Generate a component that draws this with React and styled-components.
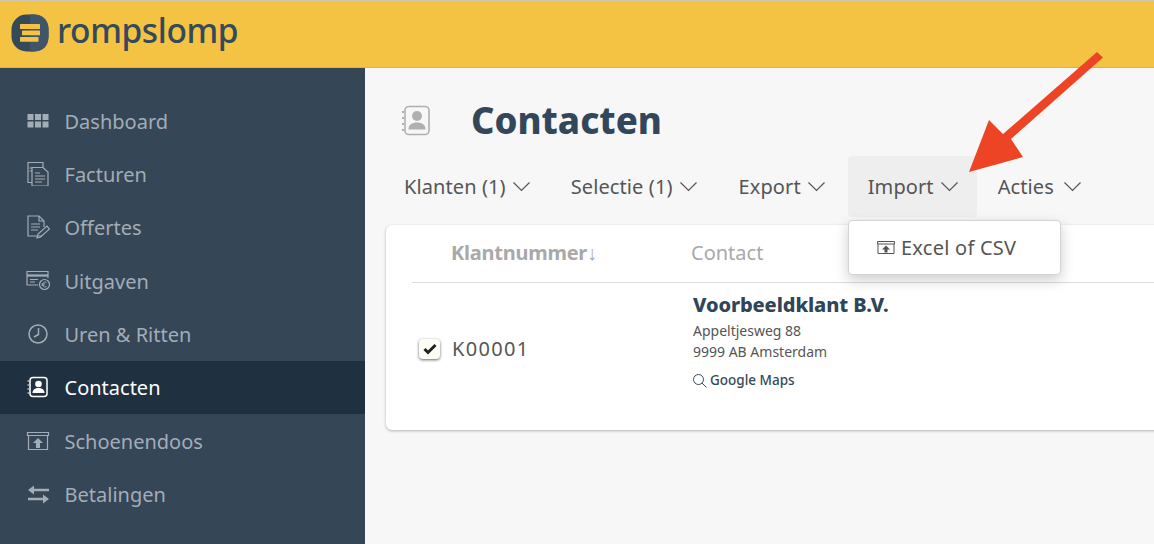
import React from "react";
import styled, { createGlobalStyle } from "styled-components";

const Global = createGlobalStyle`
  html, body { margin: 0; padding: 0; height: 544px; overflow: hidden; background: #f7f7f7; }
  body { font-family: "Noto Sans", "Open Sans", sans-serif; }
  #root { height: 544px; }
`;

const Page = styled.div`
  position: relative;
  width: 1154px;
  height: 544px;
  overflow: hidden;
  display: flex;
  flex-direction: column;
`;

const Header = styled.header`
  height: 68px;
  box-sizing: border-box;
  flex: none;
  background: #f5c344;
  border-top: 1px solid #cfc6ae;
  border-bottom: 1px solid #e3b23c;
  display: flex;
  align-items: center;
  padding: 0 0 2px 11px;
  gap: 8px;
`;

const Brand = styled.span`
  font-size: 33.5px;
  line-height: 1;
  color: #34495a;
  letter-spacing: -0.4px;
  font-weight: 500;
  padding-bottom: 4px;
`;

const Body = styled.div`
  flex: 1;
  display: flex;
  min-height: 0;
`;

const Sidebar = styled.nav`
  width: 365px;
  flex: none;
  background: #354657;
  padding-top: 26px;
  box-sizing: border-box;
`;

const NavItem = styled.div`
  height: 53.33px;
  box-sizing: border-box;
  display: flex;
  align-items: center;
  padding-left: 26px;
  gap: 15px;
  font-size: 20px;
  color: ${(p) => (p.$active ? "#ffffff" : "#a3adb6")};
  background: ${(p) => (p.$active ? "#1f3040" : "transparent")};
`;

const NavLabel = styled.span`
  padding-top: 1px;
  margin-left: -0.5px;
`;

const NavIcon = styled.svg`
  width: 24px;
  height: 24px;
  flex: none;
  fill: none;
  stroke: currentColor;
  stroke-width: 1.2;
`;

const Main = styled.main`
  flex: 1;
  min-width: 0;
  position: relative;
  background: #f7f7f7;
  padding: 32px 0 0 21px;
  box-sizing: border-box;
`;

const TitleRow = styled.div`
  display: flex;
  align-items: center;
  height: 42px;
  gap: 40px;
  padding-left: 15px;
`;

const TitleIcon = styled.svg`
  width: 30px;
  height: 32px;
  flex: none;
`;

const Title = styled.h1`
  margin: 0;
  padding-bottom: 2px;
  font-size: 36.5px;
  font-weight: 800;
  color: #33475a;
  line-height: 42px;
`;

const Tabs = styled.div`
  display: flex;
  margin-top: 14px;
  height: 61px;
  margin-bottom: 8px;
`;

const Tab = styled.div`
  height: 61px;
  box-sizing: border-box;
  padding: 0 ${(p) => p.$pr ?? 20}px 0 20px;
  margin: 0 ${(p) => p.$mr ?? 0}px 0 ${(p) => p.$ml ?? 0}px;
  display: flex;
  align-items: center;
  gap: ${(p) => p.$gap ?? 6}px;
  font-size: 20px;
  letter-spacing: 0.1px;
  color: #555555;
  border-radius: 4px;
  background: ${(p) => (p.$open ? "#eeeeee" : "transparent")};
`;

const Chevron = styled.svg`
  width: 19px;
  height: 11px;
  flex: none;
  fill: none;
  stroke: #555555;
  stroke-width: 1.2;
`;

const Card = styled.section`
  height: 205px;
  margin-right: -20px;
  background: #ffffff;
  border-radius: 6px;
  box-shadow: 0 1px 3px rgba(0, 0, 0, 0.28);
  padding-left: 26px;
`;

const HeadRow = styled.div`
  height: 58px;
  box-sizing: border-box;
  border-bottom: 1px solid #dddddd;
  padding-bottom: 2px;
  display: flex;
  align-items: center;
  font-size: 20px;
  color: #a9a9a9;
  padding-left: 39px;
`;

const SortHead = styled.span`
  width: 240px;
  font-weight: 700;
  letter-spacing: -0.25px;
`;

const DataRow = styled.div`
  display: flex;
  align-items: center;
  height: 132px;
  padding-left: 7px;
`;

const CheckBox = styled.span`
  width: 21px;
  height: 20px;
  box-sizing: border-box;
  border-radius: 4px;
  background: #fdfdf5;
  box-shadow: 0 1px 3px rgba(0, 0, 0, 0.6);
  display: flex;
  align-items: center;
  justify-content: center;
  flex: none;
`;

const Number = styled.span`
  width: 253px;
  padding: 0 0 2px 12px;
  box-sizing: border-box;
  font-size: 20px;
  letter-spacing: 1.3px;
  color: #555555;
`;

const ContactCell = styled.div`
  display: flex;
  flex-direction: column;
  align-self: flex-start;
  margin-top: 8px;
`;

const ContactName = styled.div`
  font-size: 20px;
  font-weight: 800;
  line-height: 28px;
  letter-spacing: -0.1px;
  color: #2f4558;
  margin-bottom: 1px;
`;

const Address = styled.div`
  font-size: 14px;
  line-height: 21px;
  color: #555555;
`;

const MapLink = styled.div`
  display: flex;
  align-items: center;
  gap: 3px;
  font-size: 13.5px;
  font-weight: 500;
  color: #34495a;
  margin-top: 9px;
  margin-left: -1px;
  line-height: 18px;
`;

const Dropdown = styled.div`
  position: absolute;
  left: 483px;
  top: 152px;
  width: 213px;
  height: 55px;
  box-sizing: border-box;
  background: #ffffff;
  border: 1px solid #d4d4d4;
  border-radius: 4px;
  box-shadow: 0 5px 14px rgba(0, 0, 0, 0.2);
  display: flex;
  align-items: center;
  gap: 6px;
  padding-left: 28px;
  font-size: 20px;
  letter-spacing: 0.25px;
  color: #555555;
`;

const Arrow = styled.svg`
  position: absolute;
  left: 960px;
  top: 48px;
  width: 150px;
  height: 130px;
  pointer-events: none;
`;

const Logo = () => (
  <svg width="38" height="38" viewBox="0 0 38 38">
    <rect x="0.500" y="0.500" width="37" height="37" rx="15" fill="#34495a" />
    <path d="M19 .5h4c9 0 14.500 5.500 14.500 14.500v8c0 9-5.500 14.500-14.500 14.500h-4z" fill="#405567" />
    <rect x="9" y="10" width="20" height="5" rx="0.600" fill="#f5c344" />
    <rect x="11" y="16.500" width="18" height="4.800" rx="0.600" fill="#f5c344" />
    <rect x="9" y="23" width="18.500" height="4.800" rx="0.600" fill="#f5c344" />
  </svg>
);

const icons = {
  dashboard: (
    <g fill="currentColor" stroke="none">
      {[1.5, 9, 16.5].flatMap((x) =>
        [5, 12.5].map((y) => <rect key={x + "-" + y} x={x} y={y} width="6" height="6" />)
      )}
    </g>
  ),
  invoice: (
    <>
      <path d="M6 20.500H2V.5h15v5" />
      <path d="M6 5.500h11l5 4.500v14H6z" />
      <path d="M9 11h5M9 14h10M9 17h10M9 20h7" />
      <path d="M3.500 6H6M3.500 9H6" strokeWidth="1" />
    </>
  ),
  quote: (
    <>
      <path d="M16 21H2V1h11l5 5v6" />
      <path d="M13 1v5h5" />
      <path d="M5 9h9M5 12h9M5 15h7" />
      <path d="M11 23l1-4 9-8 2.500 3-9 8z" />
    </>
  ),
  expense: (
    <>
      <path d="M12 16H1V2.500h21V9" />
      <path d="M1 6.500h21" strokeWidth="2.200" />
      <path d="M4 10.500h8M4 13h5" />
      <circle cx="18.500" cy="15.500" r="5" />
      <path d="M20.500 13.500a2.500 2.500 0 1 0 0 4M15.500 15h3.500M15.500 16.200h3" strokeWidth="0.900" />
    </>
  ),
  clock: (
    <>
      <circle cx="12" cy="12" r="9" strokeWidth="1.500" />
      <path d="M12.500 6v6.500L8 15" strokeWidth="1.500" />
    </>
  ),
  contacts: (
    <>
      <rect x="4" y="2.500" width="17" height="19" rx="3" strokeWidth="1.500" />
      <path d="M1.500 6h3M1.500 10h3M1.500 14h3M1.500 18h3" strokeWidth="1.200" strokeDasharray="1.500 1" />
      <circle cx="12.500" cy="9" r="3.300" fill="currentColor" stroke="none" />
      <path d="M6.500 18c0-3.500 2.500-5 6-5s6 1.500 6 5z" fill="currentColor" stroke="none" />
    </>
  ),
  box: (
    <>
      <path d="M1.500 3.500h21v3h-21z" />
      <path d="M2.500 6.500v14h19v-14" />
      <path d="M12 9l5 5h-3v5h-4v-5H7z" fill="currentColor" stroke="none" />
    </>
  ),
  transfer: (
    <g fill="currentColor" stroke="none">
      <path d="M8 3.500v3.200h15v2.600H8v3.200L2 8z" />
      <path d="M17 12.500v3.200H2v2.600h15v3.200l6-4.500z" />
    </g>
  ),
};

const navItems = [
  ["dashboard", "Dashboard"],
  ["invoice", "Facturen"],
  ["quote", "Offertes"],
  ["expense", "Uitgaven"],
  ["clock", "Uren & Ritten"],
  ["contacts", "Contacten", true],
  ["box", "Schoenendoos"],
  ["transfer", "Betalingen"],
];

const Down = () => (
  <Chevron viewBox="0 0 19 11">
    <path d="M1.500 1.500l8 8 8-8" />
  </Chevron>
);

export default function App() {
  return (
    <Page>
      <Global />
      <Header>
        <Logo />
        <Brand>rompslomp</Brand>
      </Header>
      <Body>
        <Sidebar>
          {navItems.map(([icon, label, active]) => (
            <NavItem key={label} $active={active}>
              <NavIcon viewBox="0 0 24 24">{icons[icon]}</NavIcon>
              <NavLabel>{label}</NavLabel>
            </NavItem>
          ))}
        </Sidebar>
        <Main>
          <TitleRow>
            <TitleIcon viewBox="0 0 30 32">
              <rect x="4" y="1.500" width="24" height="28" rx="4" fill="none" stroke="#b0b0b0" strokeWidth="1.600" />
              <path d="M1 7h2M1 13h2M1 19h2M1 25h2" stroke="#b0b0b0" strokeWidth="2" />
              <circle cx="16" cy="11" r="5" fill="#b0b0b0" />
              <path d="M7.500 24.500c0-5 3.500-7 8.500-7s8.500 2 8.500 7z" fill="#b0b0b0" />
            </TitleIcon>
            <Title>Contacten</Title>
          </TitleRow>
          <Tabs>
            <Tab $ml={-2}>Klanten (1) <Down /></Tab>
            <Tab>Selectie (1) <Down /></Tab>
            <Tab $ml={1} $mr={2}>Export <Down /></Tab>
            <Tab $open $pr={18}>Import <Down /></Tab>
            <Tab $ml={1} $gap={9}>Acties <Down /></Tab>
          </Tabs>
          <Card>
            <HeadRow>
              <SortHead>Klantnummer↓</SortHead>
              <span>Contact</span>
            </HeadRow>
            <DataRow>
              <CheckBox>
                <svg width="14" height="12" viewBox="0 0 14 12">
                  <path d="M1.500 6l3.500 3.500L12.500 2" fill="none" stroke="#222" strokeWidth="3" />
                </svg>
              </CheckBox>
              <Number>K00001</Number>
              <ContactCell>
                <ContactName>Voorbeeldklant B.V.</ContactName>
                <Address>Appeltjesweg 88</Address>
                <Address>9999 AB Amsterdam</Address>
                <MapLink>
                  <svg width="15" height="15" viewBox="0 0 15 15" fill="none" stroke="#34495a" strokeWidth="1">
                    <circle cx="6.500" cy="6.500" r="5" />
                    <path d="M10 10l4.500 4.500" />
                  </svg>
                  Google Maps
                </MapLink>
              </ContactCell>
            </DataRow>
          </Card>
          <Dropdown>
            <svg width="18" height="15" viewBox="0 0 18 15" fill="none" stroke="#555" strokeWidth="1">
              <path d="M.5 1.500h17v2.500H.5zM1 4v9.500h16V4" />
              <path d="M9 5.500l4 4h-2.500v3h-3v-3H5z" fill="#555" stroke="none" />
            </svg>
            Excel of CSV
          </Dropdown>
        </Main>
      </Body>
      <Arrow viewBox="0 0 150 130">
        <path d="M137 4L143 9.500 51 91 63 109 9 124 29 72 43 86z" fill="#ec4425" />
      </Arrow>
    </Page>
  );
}
